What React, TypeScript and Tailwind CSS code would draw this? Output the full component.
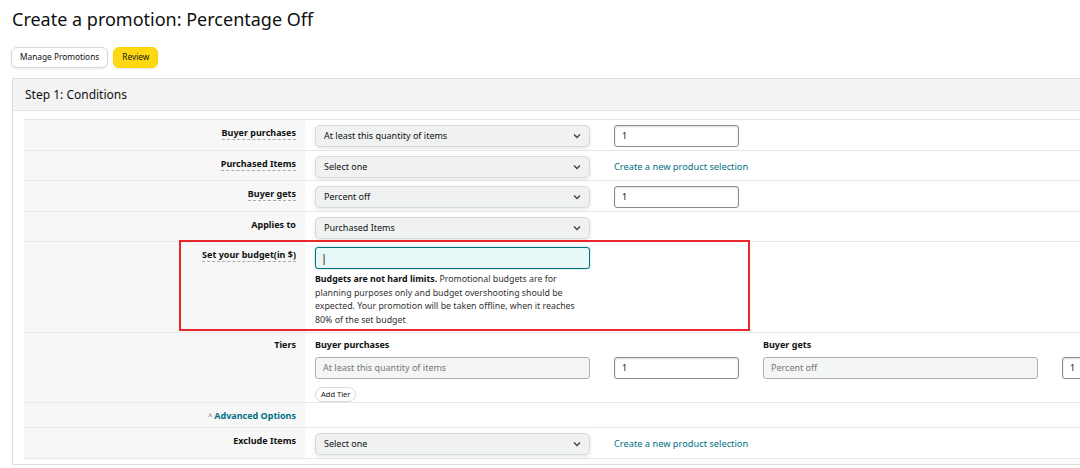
import React from "react";

const FONT = { fontFamily: '"Noto Sans", "Liberation Sans", Arial, sans-serif' };

function Chevron() {
  return (
    <svg width="8" height="6" viewBox="0 0 8 6" className="shrink-0">
      <path d="M1 1.5 L4 4.5 L7 1.5" fill="none" stroke="#444" strokeWidth="1.4" />
    </svg>
  );
}

function Select({ value }: { value: string }) {
  return (
    <div className="flex h-[22px] w-[275px] items-center justify-between rounded-[5px] border border-[#d5d9d9] bg-[#f0f2f2] pl-[8px] pr-[8px] text-[9px] text-[#0f1111] shadow-[0_2px_4px_rgba(213,217,217,0.6)]">
      <span>{value}</span>
      <Chevron />
    </div>
  );
}

function NumInput({ value = "1" }: { value?: string }) {
  return (
    <div className="flex h-[22px] w-[125px] items-center rounded-[3px] border border-[#888c8c] bg-white pl-[7px] text-[9px] text-[#0f1111] shadow-[inset_0_1px_2px_rgba(15,17,17,0.15)]">
      {value}
    </div>
  );
}

function Link({ children }: { children: React.ReactNode }) {
  return <span className="text-[9.25px] text-[#007185]">{children}</span>;
}

function Label({ children, dotted }: { children: React.ReactNode; dotted?: boolean }) {
  return (
    <span
      className={`text-[9px] font-bold leading-[13px] text-[#0f1111] ${dotted ? "border-b border-dashed border-[#aaa]" : ""}`}
    >
      {children}
    </span>
  );
}

function Row({
  label,
  children,
  className = "h-[30.5px]",
  labelPad = "pt-[6px]",
}: {
  label: React.ReactNode;
  children?: React.ReactNode;
  className?: string;
  labelPad?: string;
}) {
  return (
    <div className={`relative flex border-b border-[#e7e7e7] ${className}`}>
      <div className={`flex w-[281px] shrink-0 items-start justify-end bg-[#f7f7f7] pr-[9px] ${labelPad}`}>
        {label}
      </div>
      <div className="flex-1 pb-[3px] pl-[10px] pt-[5px]">{children}</div>
    </div>
  );
}

export default function App() {
  return (
    <div className="h-[468px] w-[1080px] overflow-hidden bg-white" style={FONT}>
      <div className="px-[12px] pt-[5px] text-[18px] leading-[28px] text-[#0f1111]">
        Create a promotion: Percentage Off
      </div>

      <div className="mt-[14px] flex gap-[5px] pl-[11px]">
        <button className="h-[21px] rounded-[6px] border border-[#d5d9d9] bg-white px-[8px] text-[8.3px] text-[#0f1111] shadow-[0_1px_2px_rgba(213,217,217,0.5)]">
          Manage Promotions
        </button>
        <button className="h-[21px] rounded-[6px] border border-[#fcd200] bg-[#ffd814] px-[8px] text-[8.3px] text-[#0f1111] shadow-[0_1px_2px_rgba(213,217,217,0.5)]">
          Review
        </button>
      </div>

      <div className="ml-[12px] mt-[10px] w-[1100px] border border-[#dddddd]">
        <div className="flex h-[32px] items-center border-b border-[#e3e3e3] bg-[#f3f3f3] pl-[12px] text-[12px] text-[#0f1111]">
          Step 1: Conditions
        </div>

        <div className="px-[11px] pb-[5px] pt-[8px]">
          <div className="border-t border-[#e7e7e7]">
            <Row label={<Label dotted>Buyer purchases</Label>}>
              <div className="flex items-center gap-[24px]">
                <Select value="At least this quantity of items" />
                <NumInput />
              </div>
            </Row>

            <Row label={<Label dotted>Purchased Items</Label>}>
              <div className="flex items-center gap-[24px]">
                <Select value="Select one" />
                <Link>Create a new product selection</Link>
              </div>
            </Row>

            <Row label={<Label dotted>Buyer gets</Label>}>
              <div className="flex items-center gap-[24px]">
                <Select value="Percent off" />
                <NumInput />
              </div>
            </Row>

            <Row label={<Label>Applies to</Label>}>
              <Select value="Purchased Items" />
            </Row>

            <Row label={<Label dotted>Set your budget(in $)</Label>} className="h-[91px]">
              <div className="flex h-[22px] w-[275px] items-center rounded-[3px] border border-[#007185] bg-[#e8f8f8] pl-[5px] text-[11px] text-[#0f1111] shadow-[0_0_2px_rgba(0,113,133,0.4)]">
                |
              </div>
              <p className="mt-[4px] w-[278px] text-[8.8px] leading-[13.5px] text-[#333]">
                <b className="text-[#0f1111]">Budgets are not hard limits.</b> Promotional budgets are for
                planning purposes only and budget overshooting should be expected. Your promotion will be
                taken offline, when it reaches 80% of the set budget
              </p>
              <div className="pointer-events-none absolute left-[155px] top-[-2px] h-[91px] w-[571px] border-2 border-[#e8262b]" />
            </Row>

            <Row label={<Label>Tiers</Label>} className="h-[70px]" labelPad="pt-[5px]">
              <div className="flex gap-[24px]">
                <div>
                  <div className="text-[9px] font-bold leading-[14px] text-[#0f1111]">Buyer purchases</div>
                  <div className="mt-[5px] flex gap-[24px]">
                    <div className="flex h-[22px] w-[275px] items-center rounded-[3px] border border-[#adb1b8] bg-[#f4f5f5] pl-[7px] text-[9px] text-[#777]">
                      At least this quantity of items
                    </div>
                    <NumInput />
                  </div>
                  <button className="mt-[4px] h-[15px] rounded-[8px] border border-[#d5d9d9] bg-white px-[5px] text-[7.5px] leading-[13px] text-[#0f1111]">
                    Add Tier
                  </button>
                </div>
                <div>
                  <div className="text-[9px] font-bold leading-[14px] text-[#0f1111]">Buyer gets</div>
                  <div className="mt-[5px] flex gap-[24px]">
                    <div className="flex h-[22px] w-[275px] items-center rounded-[3px] border border-[#adb1b8] bg-[#f4f5f5] pl-[7px] text-[9px] text-[#777]">
                      Percent off
                    </div>
                    <NumInput />
                  </div>
                </div>
              </div>
            </Row>

            <Row
              label={
                <span className="text-[9px] font-bold leading-[13px] text-[#007185]">
                  <span className="mr-[2px] text-[7px] font-normal text-[#555]">^</span>Advanced Options
                </span>
              }
              className="h-[25px]"
            />

            <Row label={<Label>Exclude Items</Label>}>
              <div className="flex items-center gap-[24px]">
                <Select value="Select one" />
                <Link>Create a new product selection</Link>
              </div>
            </Row>
          </div>
        </div>
      </div>
    </div>
  );
}
